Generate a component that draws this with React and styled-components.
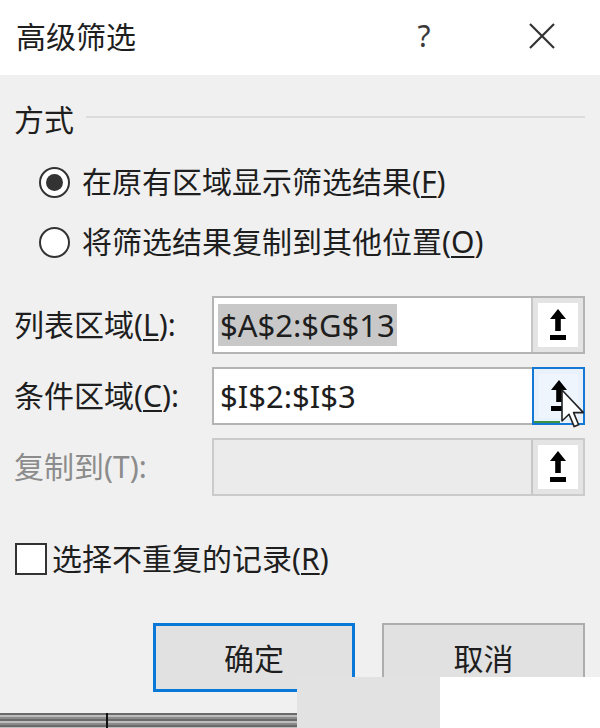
import React from "react";
import styled, { createGlobalStyle } from "styled-components";

const GlobalStyle = createGlobalStyle`
  html, body {
    margin: 0;
    padding: 0;
    background: #f0f0f0;
  }
  body {
    font-family: "Noto Sans", "Noto Sans CJK SC", sans-serif;
    color: #1e1e1e;
  }
`;

const Dialog = styled.div`
  position: relative;
  width: 600px;
  height: 728px;
  overflow: hidden;
  background: #f0f0f0;
  display: flex;
  flex-direction: column;
`;

const TitleBar = styled.div`
  height: 75px;
  flex-shrink: 0;
  background: #fff;
  display: flex;
  align-items: center;
  padding: 0 18px 0 16px;
`;

const Title = styled.div`
  flex: 1;
  font-size: 30px;
  line-height: 40px;
  margin-top: -2px;
`;

const TitleButton = styled.div`
  width: 80px;
  height: 48px;
  display: flex;
  align-items: center;
  justify-content: center;
  font-size: 30px;
  color: #3a3a3a;
  margin-top: -4px;
  margin-right: ${(p) => p.$gapRight || 0}px;
`;

const Body = styled.div`
  padding: 23px 15px 0 14px;
`;

const GroupHeader = styled.div`
  height: 40px;
  display: flex;
  align-items: center;
  gap: 12px;
  font-size: 30px;
  &::after {
    content: "";
    flex: 1;
    height: 2px;
    background: #dcdcdc;
    margin-top: -2px;
  }
`;

const RadioList = styled.div`
  margin-top: 22px;
  padding-left: 25px;
  display: flex;
  flex-direction: column;
  gap: 16px;
`;

const OptionRow = styled.div`
  height: 44px;
  display: flex;
  align-items: center;
  gap: ${(p) => p.$gap || 12}px;
  font-size: 30px;
  line-height: 40px;
`;

const RadioCircle = styled.span`
  width: 31px;
  height: 31px;
  box-sizing: border-box;
  border-radius: 50%;
  border: 2px solid #333;
  background: #fff;
  display: grid;
  place-items: center;
  &::after {
    content: "";
    width: 17px;
    height: 17px;
    border-radius: 50%;
    background: ${(p) => (p.$checked ? "#333" : "transparent")};
  }
`;

const Key = styled.span`
  text-decoration: underline;
  text-underline-offset: 3px;
  text-decoration-thickness: 2px;
`;

const Fields = styled.div`
  margin-top: 32px;
  display: flex;
  flex-direction: column;
  gap: 13px;
`;

const FieldRow = styled.div`
  height: 58px;
  display: flex;
  align-items: center;
`;

const FieldLabel = styled.div`
  width: 198px;
  flex-shrink: 0;
  font-size: 30px;
  line-height: 40px;
  color: ${(p) => (p.$disabled ? "#8c8c8c" : "#1e1e1e")};
`;

const InputBox = styled.div`
  flex: 1;
  height: 100%;
  box-sizing: border-box;
  border: 2px solid ${(p) => (p.$disabled ? "#cbcbcb" : "#b4b4b4")};
  background: ${(p) => (p.$disabled ? "#ebebeb" : "#fff")};
  display: flex;
`;

const InputText = styled.div`
  flex: 1;
  display: flex;
  align-items: center;
  padding-left: 4px;
  font-size: 31px;
`;

const Selection = styled.span`
  background: ${(p) => (p.$selected ? "#c8c8c8" : "transparent")};
  line-height: 42px;
  padding: 0 2px;
`;

const Picker = styled.div`
  position: relative;
  width: 52px;
  box-sizing: border-box;
  padding: 5px;
  border-left: 2px solid #c6c6c6;
  background: #e4e4e4;
  display: flex;
  ${(p) =>
    p.$focused &&
    `
    border: 2px solid #1479d4;
    margin: -2px -2px -2px 0;
    width: 53px;
    background: #e9f2fb;
    &::after {
      content: "";
      position: absolute;
      left: 0;
      bottom: 0;
      width: 26px;
      height: 2px;
      background: #3d9142;
    }
  `}
`;

const PickerFace = styled.div`
  flex: 1;
  background: ${(p) => (p.$focused ? "#eef5fc" : "#fff")};
  display: grid;
  place-items: center;
`;

const CheckBox = styled.span`
  width: 32px;
  height: 32px;
  box-sizing: border-box;
  border: 2px solid #333;
  background: #fff;
`;

const CheckRow = styled(OptionRow)`
  margin-top: 43px;
  height: 40px;
  padding-left: 1px;
`;

const ButtonRow = styled.div`
  margin-top: 44px;
  display: flex;
  justify-content: flex-end;
  gap: 27px;
`;

const Button = styled.div`
  width: ${(p) => (p.$primary ? 202 : 203)}px;
  height: 69px;
  box-sizing: border-box;
  background: #e1e1e1;
  border: ${(p) => (p.$primary ? "3px solid #0a78d7" : "2px solid #adadad")};
  display: flex;
  align-items: center;
  justify-content: center;
  font-size: 30px;
  padding-bottom: 2px;
`;

const Cursor = styled.svg`
  position: absolute;
  left: 561px;
  top: 389px;
`;

const GridStrip = styled.div`
  position: absolute;
  left: 0;
  bottom: 0;
  width: 297px;
  height: 15px;
  background: repeating-linear-gradient(
    to bottom,
    #6a6a6a 0 2px,
    #bdbdbd 2px 4px,
    #8a8a8a 4px 6px
  );
  &::after {
    content: "";
    position: absolute;
    left: 106px;
    top: 0;
    width: 2px;
    height: 100%;
    background: #111;
  }
`;

const ScreenPatch = styled.div`
  position: absolute;
  left: 297px;
  top: 677px;
  right: 0;
  bottom: 0;
  background: linear-gradient(to right, #e2e2e2 0 143px, #fff 143px);
`;

function UpArrow() {
  return (
    <svg width="16" height="32" viewBox="0 0 16 32">
      <polygon points="8,0 16,10 10.8,10 10.8,22 5.2,22 5.2,10 0,10" fill="#000" />
      <rect x="0" y="26" width="16" height="5" fill="#000" />
    </svg>
  );
}

function Field({ label, value, disabled, selected, focused }) {
  return (
    <FieldRow>
      <FieldLabel $disabled={disabled}>{label}</FieldLabel>
      <InputBox $disabled={disabled}>
        <InputText>
          {value && <Selection $selected={selected}>{value}</Selection>}
        </InputText>
        <Picker $focused={focused}>
          <PickerFace $focused={focused}>
            <UpArrow />
          </PickerFace>
        </Picker>
      </InputBox>
    </FieldRow>
  );
}

export default function App() {
  return (
    <Dialog>
      <GlobalStyle />
      <TitleBar>
        <Title>高级筛选</Title>
        <TitleButton $gapRight={38}>?</TitleButton>
        <TitleButton>
          <svg width="28" height="26" viewBox="0 0 28 26">
            <path d="M2 1 L26 25 M26 1 L2 25" stroke="#333" strokeWidth="2.2" />
          </svg>
        </TitleButton>
      </TitleBar>
      <Body>
        <GroupHeader>方式</GroupHeader>
        <RadioList>
          <OptionRow>
            <RadioCircle $checked />
            <span>
              在原有区域显示筛选结果(<Key>F</Key>)
            </span>
          </OptionRow>
          <OptionRow>
            <RadioCircle />
            <span>
              将筛选结果复制到其他位置(<Key>O</Key>)
            </span>
          </OptionRow>
        </RadioList>
        <Fields>
          <Field
            label={<>列表区域(<Key>L</Key>):</>}
            value="$A$2:$G$13"
            selected
          />
          <Field
            label={<>条件区域(<Key>C</Key>):</>}
            value="$I$2:$I$3"
            focused
          />
          <Field label="复制到(T):" disabled />
        </Fields>
        <CheckRow $gap={5}>
          <CheckBox />
          <span>
            选择不重复的记录(<Key>R</Key>)
          </span>
        </CheckRow>
        <ButtonRow>
          <Button $primary>确定</Button>
          <Button>取消</Button>
        </ButtonRow>
      </Body>
      <Cursor width="24" height="40" viewBox="0 0 12 20">
        <path
          d="M0.5 0.5 L0.5 16 L4 12.6 L6.6 18.8 L8.8 17.9 L6.3 11.8 L11.2 11.8 Z"
          fill="#fff"
          stroke="#222"
          strokeWidth="0.8"
          strokeLinejoin="round"
        />
      </Cursor>
      <GridStrip />
      <ScreenPatch />
    </Dialog>
  );
}
